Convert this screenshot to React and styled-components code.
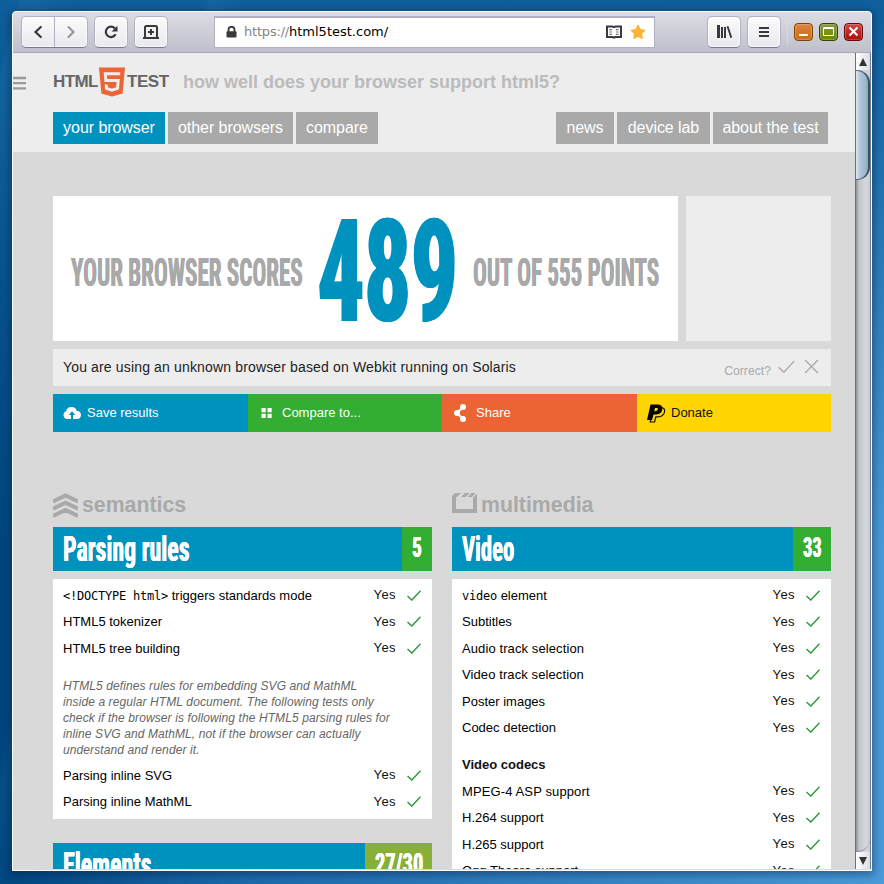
import React from 'react';
import styled, { createGlobalStyle } from 'styled-components';

const Global = createGlobalStyle`
  * { box-sizing: border-box; }
  html, body { margin: 0; padding: 0; overflow: hidden; }
  body { font-family: 'Liberation Sans', Arial, sans-serif; font-size: 13px; color: #111; }
  svg { display: block; flex: none; }
`;

const BLUE = '#0092bf';
const GREEN = '#33ae33';
const GREY = '#a9a9a9';

const Desktop = styled.div`
  width: 884px;
  height: 884px;
  padding: 11px 12px 13px;
  overflow: hidden;
  background:
    linear-gradient(105deg, transparent 1.5%, rgba(70, 150, 210, 0.13) 2%, transparent 7%, transparent 18%, rgba(70, 150, 210, 0.1) 19%, transparent 22%),
    linear-gradient(to bottom, #0f5f9c 0, rgba(15, 95, 156, 0) 62%),
    linear-gradient(to right, #00467f 0, #1c6aad 28%, #3583c3 65%, #4a9bd9 100%);
`;

const Window = styled.div`
  display: flex;
  flex-direction: column;
  width: 860px;
  height: 860px;
  border: 1px solid #fff;
  border-radius: 4px 4px 0 0;
  overflow: hidden;
  background: #d9d9d9;
  box-shadow: 0 2px 9px 2px rgba(0, 25, 60, 0.42);
`;

const Toolbar = styled.div`
  display: flex;
  align-items: center;
  flex: none;
  height: 41px;
  padding: 0 8px 1px 8px;
  background: linear-gradient(#dcdce4, #c0c0cc);
  border-bottom: 1px solid #a6a6b6;
`;

const ToolGroup = styled.div`
  display: flex;
  flex: none;
  height: 32px;
  margin-right: ${(p) => p.$after || 0}px;
  border: 1px solid #b0b1c2;
  border-bottom-color: #77798c;
  border-radius: 5px;
  background: linear-gradient(#fbfbfc, #e9e9ee);
  box-shadow: inset 0 0 0 1px rgba(255, 255, 255, 0.65);
`;

const ToolButton = styled.button`
  display: flex;
  align-items: center;
  justify-content: center;
  width: 32px;
  height: 30px;
  padding: 0;
  border: 0;
  background: none;
  & + & { width: 33px; border-left: 1px solid #b0b1c2; }
`;

const AddressBar = styled.div`
  display: flex;
  align-items: center;
  flex: none;
  width: 441px;
  height: 32px;
  margin-right: 52px;
  padding: 0 8px 1px 11px;
  background: #fff;
  border: 1px solid #b0b1c4;
  border-top-width: 2px;
  font: 13px 'DejaVu Sans', sans-serif;
  color: #000;
`;

const Url = styled.span`
  flex: 1;
  margin-left: 7px;
  white-space: nowrap;
`;
const Scheme = styled.span`
  color: #858585;
  letter-spacing: -0.2px;
`;
const StarSlot = styled.span`
  margin-left: 8px;
`;

const Divider = styled.div`
  flex: none;
  width: 1px;
  height: 24px;
  margin: 0 6px 0 6px;
  background: #d8d8e0;
`;

const WindowButton = styled.button`
  display: flex;
  flex: none;
  align-items: center;
  justify-content: center;
  width: 19px;
  height: 18px;
  margin-right: 6px;
  padding: 0;
  border: 1px solid ${(p) => p.$edge};
  border-radius: 4px;
  background: linear-gradient(${(p) => p.$top}, ${(p) => p.$bottom});
  box-shadow: inset 0 0 0 1px rgba(255, 255, 255, 0.22);
`;

const Viewport = styled.div`
  display: flex;
  height: 816px;
  flex: none;
`;

const Page = styled.main`
  width: 842px;
  height: 816px;
  overflow: hidden;
  background: #d9d9d9;
`;

const SiteHeader = styled.header`
  height: 99px;
  padding-top: 10px;
  background: #ededed;
`;

const Brand = styled.div`
  display: flex;
  align-items: center;
  height: 38px;
  color: #666;
  font-size: 17px;
  font-weight: bold;
  line-height: 20px;
`;

const BrandWord = styled.span`
  width: ${(p) => p.$w}px;
  margin-left: ${(p) => p.$before}px;
  letter-spacing: ${(p) => p.$track}px;
  white-space: nowrap;
`;

const Tagline = styled.span`
  margin-left: 14px;
  color: #bbb;
  font-size: 18px;
  white-space: nowrap;
`;

const Nav = styled.nav`
  display: flex;
  gap: 3px;
  width: 775px;
  margin: 11px 0 0 40px;
`;

const NavItem = styled.a`
  width: ${(p) => p.$w}px;
  height: 32px;
  margin-left: ${(p) => (p.$push ? 'auto' : 0)};
  color: #fff;
  background: ${(p) => (p.$active ? BLUE : GREY)};
  font-size: 16px;
  line-height: 31px;
  letter-spacing: -0.06px;
  text-align: center;
  white-space: nowrap;
`;

const Content = styled.div`
  width: 778px;
  margin: 44px 0 0 40px;
`;

const ScoreRow = styled.section`
  display: flex;
  gap: 8px;
  height: 145px;
`;

const ScoreCard = styled.div`
  display: flex;
  align-items: center;
  width: 625px;
  padding: 8px 0 0 18px;
  background: #fff;
  color: ${GREY};
`;

const AdSlot = styled.div`
  width: 145px;
  background: #ededed;
`;

const Slot = styled.div`
  width: ${(p) => p.$w}px;
  margin-right: ${(p) => p.$after || 0}px;
  white-space: nowrap;
`;

/* Condensed poster lettering: narrow Roboto squeezed on the x axis, its stems
   thickened sideways so they keep their weight. */
const Poster = styled.span`
  display: inline-block;
  font-family: Roboto, 'Liberation Sans', sans-serif;
  font-stretch: 75%;
  font-weight: ${(p) => p.$weight || 700};
  font-size: ${(p) => p.$size}px;
  line-height: 1;
  letter-spacing: ${(p) => p.$track || 0}px;
  color: ${(p) => p.$color || 'inherit'};
  text-shadow: ${(p) => p.$fat || 0.3}px 0 0 currentColor, -${(p) => p.$fat || 0.3}px 0 0 currentColor;
  transform: scaleX(${(p) => p.$squeeze});
  transform-origin: 0 50%;
`;

const AgentBar = styled.section`
  display: flex;
  align-items: center;
  height: 37px;
  margin: 8px 0;
  padding: 0 12px 2px 10px;
  background: #ededed;
  color: #222;
  font-size: 14px;
  letter-spacing: 0.152px;
`;

const Verify = styled.div`
  display: flex;
  align-items: center;
  gap: 9px;
  margin-left: auto;
  color: ${GREY};
  font-size: 12px;
  letter-spacing: 0.1px;
`;
const VerifyLabel = styled.span`
  margin-right: -2px;
  padding-top: 8px;
`;

const Actions = styled.div`
  display: grid;
  grid-template-columns: 195px 194px 195px 194px;
  height: 38px;
`;

const Action = styled.a`
  display: flex;
  align-items: center;
  padding-left: 10px;
  background: ${(p) => p.$bg};
  color: ${(p) => p.$fg || '#fff'};
  font-size: 13px;
`;
const ActionIcon = styled.span`
  width: 24px;
`;
const ActionLabel = styled.span`
  padding-bottom: 2px;
`;

const Columns = styled.div`
  display: grid;
  grid-template-columns: 379px 379px;
  column-gap: 20px;
  margin-top: 60px;
`;

const GroupTitle = styled.h2`
  display: flex;
  gap: 4px;
  height: 35px;
  margin: 0;
  color: ${GREY};
  font-size: 21.3px;
  line-height: 26px;
`;

const SectionHead = styled.h3`
  display: flex;
  justify-content: space-between;
  height: 44px;
  margin: 0;
  padding-left: 10px;
  background: ${BLUE};
  color: #fff;
`;
const SectionName = styled.div`
  width: 130px;
  padding-top: 5px;
  white-space: nowrap;
`;
const Badge = styled.div`
  width: ${(p) => p.$w}px;
  padding: 7px 0 0 10px;
  background: ${(p) => p.$bg};
  white-space: nowrap;
  overflow: hidden;
`;

const Panel = styled.div`
  margin: 8px 0 24px;
  padding: 3px 11px 4px 10px;
  background: #fff;
`;

const Row = styled.div`
  display: flex;
  align-items: center;
  height: 26.5px;
  white-space: nowrap;
`;
const RowLabel = styled.span`
  flex: 1;
  color: #000;
  letter-spacing: ${(p) => p.$track || 0}px;
`;
const Yes = styled.span`
  margin-right: 11px;
  padding-bottom: 1px;
  letter-spacing: 0.4px;
`;
const Code = styled.code`
  font: 12px 'DejaVu Sans Mono', monospace;
  letter-spacing: -0.22px;
`;
const Note = styled.p`
  margin: 16.5px 0 4px;
  color: #666;
  font-size: 12px;
  font-style: italic;
  line-height: 16px;
  letter-spacing: 0.1px;
  white-space: nowrap;
`;
const SubHead = styled.h4`
  height: 37px;
  margin: 0;
  font-size: 13px;
  line-height: 47px;
`;

const Scrollbar = styled.div`
  display: flex;
  flex-direction: column;
  width: 16px;
  height: 816px;
  border-left: 1px solid #6c6f76;
  border-right: 1px solid #777a80;
  background: linear-gradient(to right, #8e9198, #c3c6cd 22%, #d6d8df 70%, #c9ccd3);
`;
const ScrollArrow = styled.div`
  display: flex;
  align-items: center;
  justify-content: center;
  height: 17px;
  background: linear-gradient(to right, #fff, #dcdde6);
`;
const ScrollTrack = styled.div`
  flex: 1;
  border-bottom: 1px solid #8b8e95;
  border-radius: 0 0 13px 0;
`;
const Thumb = styled.div`
  height: 110px;
  border: 1px solid #4f6c83;
  border-left: 0;
  border-right: 2px solid #365269;
  border-radius: 0 13px 13px 0;
  background: linear-gradient(to right, #dfe9f2, #afc4d6 35%, #a1b9cc 75%, #8aa5ba);
`;

const Check = ({ size = 14, color = '#2f9a3a', w = 1.4 }) => (
  <svg width={size} height={size * 0.8} viewBox="0 0 14 11" fill="none" stroke={color} strokeWidth={w}>
    <path d="M.5 5.8 4.8 10 13.5.6" />
  </svg>
);

const Result = ({ children, track }) => (
  <Row>
    <RowLabel $track={track}>{children}</RowLabel>
    <Yes>Yes</Yes>
    <Check />
  </Row>
);

const Section = ({ name, squeeze, score, badgeWidth, badgeColor = GREEN, scoreSqueeze }) => (
  <SectionHead>
    <SectionName><Poster $size={35.5} $squeeze={squeeze}>{name}</Poster></SectionName>
    <Badge $w={badgeWidth} $bg={badgeColor}><Poster $size={28.5} $squeeze={scoreSqueeze}>{score}</Poster></Badge>
  </SectionHead>
);

export default function App() {
  return (
    <>
      <Global />
      <Desktop>
        <Window>
          <Toolbar>
            <ToolGroup $after={6}>
              <ToolButton>
                <svg width="16" height="16" viewBox="0 0 16 16" fill="none" stroke="#38383d" strokeWidth="2.2" strokeLinecap="round"><path d="M10.8 3 5.5 8l5.3 5" /></svg>
              </ToolButton>
              <ToolButton>
                <svg width="16" height="16" viewBox="0 0 16 16" fill="none" stroke="#96969a" strokeWidth="2.1" strokeLinecap="round"><path d="m5.5 3 5 5-5 5" /></svg>
              </ToolButton>
            </ToolGroup>
            <ToolGroup $after={6}>
              <ToolButton>
                <svg width="16" height="16" viewBox="0 0 16 16" fill="none" stroke="#38383d" strokeWidth="2.2"><path d="M12.6 10.3A5.2 5.2 0 1 1 11.9 4.4" /><path d="M14.5 1.7V7.6H8.6z" fill="#38383d" stroke="none" /></svg>
              </ToolButton>
            </ToolGroup>
            <ToolGroup $after={46}>
              <ToolButton>
                <svg width="18" height="16" viewBox="0 0 18 16" fill="none" stroke="#38383d" strokeWidth="2"><path d="M3 13V3.5Q3 2 4.5 2h9Q15 2 15 3.5V13M1 14h16M9 5v6M6 8h6" /></svg>
              </ToolButton>
            </ToolGroup>
            <AddressBar>
              <svg width="11" height="12" viewBox="0 0 11 12"><path d="M2.5 6V3.8a3 3 0 0 1 6 0V6" fill="none" stroke="#38383d" strokeWidth="1.8" /><rect x=".5" y="5.2" width="10" height="6.3" rx="1" fill="#38383d" /></svg>
              <Url><Scheme>https://</Scheme>html5test.com/</Url>
              <svg width="16" height="14" viewBox="0 0 16 14" fill="none" stroke="#38383d" strokeWidth="2"><path d="M1 1.5h5.3Q8 1.5 8 3 8 1.5 9.7 1.5H15v10.6H9.7Q8 12.1 8 13.5 8 12.1 6.3 12.1H1z" /><path d="M3.3 4.7h2.8M3.3 7h2.8M3.3 9.3h2.8M9.9 4.7h2.8M9.9 7h2.8M9.9 9.3h2.8" strokeWidth="1.2" stroke="#77777c" /></svg>
              <StarSlot>
                <svg width="16" height="16" viewBox="0 0 16 16"><path d="m8 1.3 2.1 4.3 4.7.7-3.4 3.3.8 4.7L8 12.1l-4.2 2.2.8-4.7L1.2 6.3l4.7-.7z" fill="#ffb233" stroke="#ffb233" strokeWidth="1.3" strokeLinejoin="round" /></svg>
              </StarSlot>
            </AddressBar>
            <ToolGroup $after={6}>
              <ToolButton>
                <svg width="16" height="16" viewBox="0 0 16 16" fill="#38383d"><path d="M1 1h3v13H1zM5 3h2v11H5zM8 3h2v11H8z" /><path d="m11.5 2.2 3.8 11.5" stroke="#38383d" strokeWidth="1.9" /></svg>
              </ToolButton>
            </ToolGroup>
            <ToolGroup>
              <ToolButton>
                <svg width="12" height="12" viewBox="0 0 12 12" stroke="#38383d" strokeWidth="2"><path d="M1 2h10M1 6h10M1 10h10" /></svg>
              </ToolButton>
            </ToolGroup>
            <Divider />
            <WindowButton $edge="#7c430c" $top="#d98545" $bottom="#cf6c08">
              <svg width="11" height="11" stroke="#fff" strokeWidth="2"><path d="M1 9h9" /></svg>
            </WindowButton>
            <WindowButton $edge="#304500" $top="#86983f" $bottom="#6d8600">
              <svg width="11" height="9" fill="none" stroke="#fff" strokeWidth="1"><path d="M.5.5h10v8H.5zM.5 1.5h10" /></svg>
            </WindowButton>
            <WindowButton $edge="#650a0a" $top="#cf4a48" $bottom="#b00a08">
              <svg width="11" height="11" stroke="#fff" strokeWidth="2"><path d="m1.5 1.5 8 8M9.5 1.5l-8 8" /></svg>
            </WindowButton>
          </Toolbar>

          <Viewport>
            <Page>
              <SiteHeader>
                <Brand>
                  <svg width="13" height="15" viewBox="0 0 13 15" stroke="#9a9a9a" strokeWidth="2.3"><path d="M0 3h13M0 8.2h13M0 13.4h13" /></svg>
                  <BrandWord $w={46} $before={27} $track={-0.6}>HTML</BrandWord>
                  <svg width="26" height="30" viewBox="0 0 26 30"><path d="M0 .5h26l-2.4 26L13 29.5 2.4 26.5z" fill="#ec6434" /><path d="M21.2 6.800H6.300L6.900 13.500H19.200L18.500 21.400 13 23.200 7.500 21.400 7.200 17.500" fill="none" stroke="#ededed" strokeWidth="3" /></svg>
                  <BrandWord $w={42} $before={2} $track={-0.45}>TEST</BrandWord>
                  <Tagline>how well does your browser support html5?</Tagline>
                </Brand>
                <Nav>
                  <NavItem $w={112} $active>your browser</NavItem>
                  <NavItem $w={125}>other browsers</NavItem>
                  <NavItem $w={82}>compare</NavItem>
                  <NavItem $w={58} $push>news</NavItem>
                  <NavItem $w={93}>device lab</NavItem>
                  <NavItem $w={115}>about the test</NavItem>
                </Nav>
              </SiteHeader>

              <Content>
                <ScoreRow>
                  <ScoreCard>
                    <Slot $w={229} $after={17}><Poster $size={38} $squeeze={0.606}>YOUR BROWSER SCORES</Poster></Slot>
                    <Slot $w={137} $after={19}><Poster $size={143} $squeeze={0.66} $track={-2} $fat={1} $weight={800} $color={BLUE}>489</Poster></Slot>
                    <Slot $w={184}><Poster $size={38} $squeeze={0.606}>OUT OF 555 POINTS</Poster></Slot>
                  </ScoreCard>
                  <AdSlot />
                </ScoreRow>

                <AgentBar>
                  You are using an unknown browser based on Webkit running on Solaris
                  <Verify>
                    <VerifyLabel>Correct?</VerifyLabel>
                    <Check size={17} color={GREY} w={1.1} />
                    <svg width="15" height="15" viewBox="0 0 14 14" stroke={GREY} strokeWidth="1.2"><path d="m1 1 12 12M13 1 1 13" /></svg>
                  </Verify>
                </AgentBar>

                <Actions>
                  <Action $bg={BLUE}>
                    <ActionIcon>
                      <svg width="18" height="14" viewBox="0 0 18 14"><path d="M4.5 13A4 4 0 0 1 3 5.3 5.7 5.7 0 0 1 13.9 5 4 4 0 0 1 14 13z" fill="#fff" /><path d="M9 5.3 5.8 9H8v4h2V9h2.2z" fill={BLUE} /></svg>
                    </ActionIcon>
                    <ActionLabel>Save results</ActionLabel>
                  </Action>
                  <Action $bg={GREEN}>
                    <ActionIcon>
                      <svg width="16" height="10" viewBox="0 0 16 10" fill="#fff"><path d="M3.5 0h4.2v4.2H3.5zM9.5 0h4.2v4.2H9.500zM3.500 5.800h4.200V10H3.500zM9.500 5.800h4.200V10H9.500z" /></svg>
                    </ActionIcon>
                    <ActionLabel>Compare to...</ActionLabel>
                  </Action>
                  <Action $bg="#ec6434">
                    <ActionIcon>
                      <svg width="16" height="18" viewBox="0 0 16 18" fill="#fff"><path d="M11 3 5 9l6 6" fill="none" stroke="#fff" strokeWidth="2" /><circle cx="11" cy="3" r="3" /><circle cx="5" cy="9" r="3" /><circle cx="11" cy="15" r="3" /></svg>
                    </ActionIcon>
                    <ActionLabel>Share</ActionLabel>
                  </Action>
                  <Action $bg="#ffd500" $fg="#111">
                    <ActionIcon>
                      <svg width="20" height="19" viewBox="0 0 20 19"><path d="M6.5 3.5H14q4.5.5 3.5 4.7-1 4.6-6.5 4.6H8.8L7.600 18H3.200z" fill="none" stroke="#111" strokeWidth="1.200" /><path fillRule="evenodd" d="M3.5.5H11Q16.200 1 15.300 5.600 14.300 10.500 9 10.500H6.500L5 16H0zM8 3.700 7.200 7.200H8.600Q10.500 7 10.900 5.300 11.200 3.700 9.500 3.700z" fill="#000" /></svg>
                    </ActionIcon>
                    <ActionLabel>Donate</ActionLabel>
                  </Action>
                </Actions>

                <Columns>
                  <div>
                    <GroupTitle>
                      <svg width="25" height="27" viewBox="0 0 25 27" fill="none" stroke={GREY} strokeWidth="4"><path d="M0 9.5 12.500 3.500 25 9.500M0 16.700 12.500 10.700 25 16.700M0 23.900 12.500 17.900 25 23.900" /></svg>
                      semantics
                    </GroupTitle>
                    <Section name="Parsing rules" squeeze={0.672} score="5" badgeWidth={30} scoreSqueeze={0.68} />
                    <Panel>
                      <Result><Code>&lt;!DOCTYPE html&gt;</Code> triggers standards mode</Result>
                      <Result>HTML5 tokenizer</Result>
                      <Result>HTML5 tree building</Result>
                      <Note>
                        HTML5 defines rules for embedding SVG and MathML<br />
                        inside a regular HTML document. The following tests only<br />
                        check if the browser is following the HTML5 parsing rules for<br />
                        inline SVG and MathML, not if the browser can actually<br />
                        understand and render it.
                      </Note>
                      <Result>Parsing inline SVG</Result>
                      <Result>Parsing inline MathML</Result>
                    </Panel>
                    <Section name="Elements" squeeze={0.675} score="27/30" badgeWidth={67} badgeColor="#88b038" scoreSqueeze={0.72} />
                  </div>
                  <div>
                    <GroupTitle>
                      <svg width="25" height="22" viewBox="0 0 25 22" fill={GREY}><path d="M0 4 3 1h6L5 5H4v12h17V5h-6l4-4h6v20H0z" /><path d="m8.5 5 4-4h6l-4 4z" /><path d="m12 1-4.5 4.5M18.7 1l-4.5 4.5M25 .8l-4.5 4.500" stroke="#d9d9d9" strokeWidth="1.300" /></svg>
                      multimedia
                    </GroupTitle>
                    <Section name="Video" squeeze={0.64} score="33" badgeWidth={38} scoreSqueeze={0.65} />
                    <Panel>
                      <Result><Code>video</Code> element</Result>
                      <Result>Subtitles</Result>
                      <Result track={0.1}>Audio track selection</Result>
                      <Result track={0.1}>Video track selection</Result>
                      <Result>Poster images</Result>
                      <Result>Codec detection</Result>
                      <SubHead>Video codecs</SubHead>
                      <Result track={0.12}>MPEG-4 ASP support</Result>
                      <Result>H.264 support</Result>
                      <Result>H.265 support</Result>
                      <Result>Ogg Theora support</Result>
                    </Panel>
                  </div>
                </Columns>
              </Content>
            </Page>
            <Scrollbar>
              <ScrollArrow><svg width="8" height="8"><path d="M4 0 8 8H0z" fill="#333" /></svg></ScrollArrow>
              <Thumb />
              <ScrollTrack />
              <ScrollArrow><svg width="8" height="8"><path d="M0 0h8L4 8z" fill="#333" /></svg></ScrollArrow>
            </Scrollbar>
          </Viewport>
        </Window>
      </Desktop>
    </>
  );
}
